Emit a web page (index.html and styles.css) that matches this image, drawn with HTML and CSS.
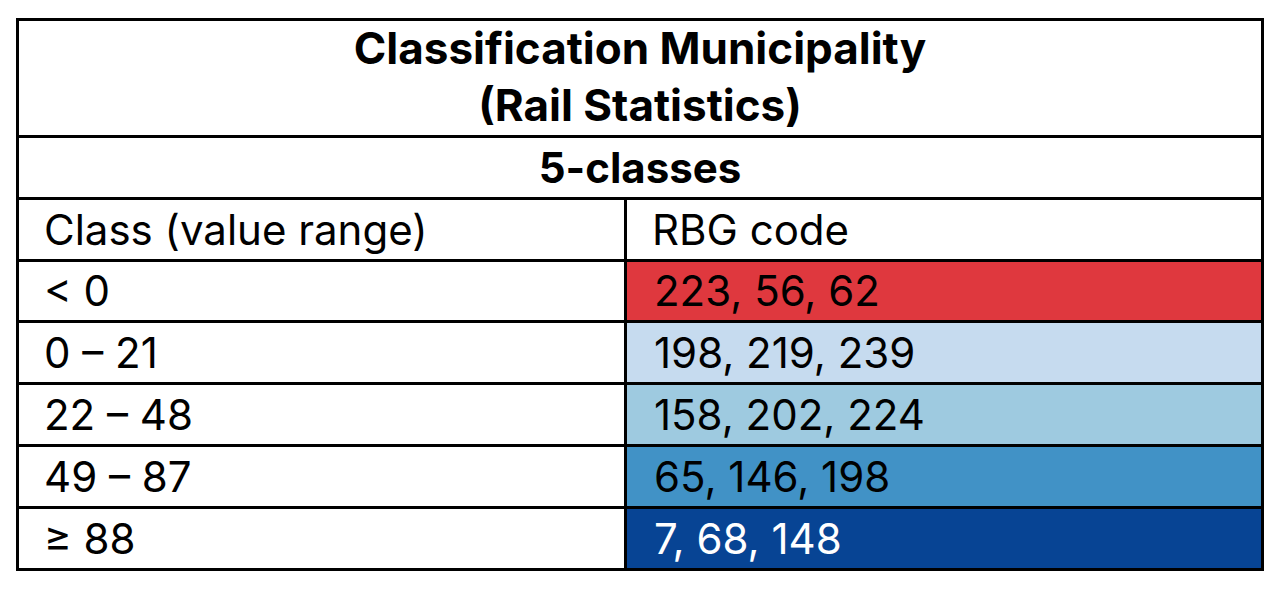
FILE: index.html
```html
<!DOCTYPE html>
<html>
<head>
<meta charset="utf-8">
<link rel="stylesheet" href="styles.css">
</head>
<body>
<div class="legend">
  <div class="cell title span">Classification Municipality<br>(Rail Statistics)</div>
  <div class="cell sub span">5-classes</div>
  <div class="cell">Class (value range)</div>
  <div class="cell">RBG code</div>
  <div class="cell">&lt; 0</div>
  <div class="cell c1">223, 56, 62</div>
  <div class="cell">0 – 21</div>
  <div class="cell c2">198, 219, 239</div>
  <div class="cell">22 – 48</div>
  <div class="cell c3">158, 202, 224</div>
  <div class="cell">49 – 87</div>
  <div class="cell c4">65, 146, 198</div>
  <div class="cell">≥ 88</div>
  <div class="cell c5">7, 68, 148</div>
</div>
</body>
</html>
```
FILE: styles.css
```css
html, body {
  margin: 0;
  padding: 0;
  background: #ffffff;
}
body {
  padding: 18px 0 0 16px;
  font-family: Inter, "Liberation Sans", sans-serif;
  color: #000;
}
.legend {
  display: grid;
  grid-template-columns: 608px 637px;
  grid-template-rows: 117px 62px 62px 61px 62px 62px 62px 62px;
  width: 1245px;
  border-left: 3px solid #000;
  border-top: 3px solid #000;
}
.cell {
  box-sizing: border-box;
  border-right: 3px solid #000;
  border-bottom: 3px solid #000;
  display: flex;
  align-items: center;
  padding: 0 0 0 25px;
  font-size: 42px;
  line-height: 1;
  white-space: nowrap;
}
.span {
  grid-column: 1 / 3;
  justify-content: center;
  padding-left: 0;
  font-weight: 700;
  text-align: center;
}
.title {
  font-size: 44px;
  line-height: 57px;
  padding-bottom: 2px;
}
.sub {
  font-size: 42px;
}
.c1 { background: #df383e; }
.c2 { background: #c6dbef; }
.c3 { background: #9ecae0; }
.c4 { background: #4192c6; }
.c5 { background: #074494; color: #ffffff; }
.c1, .c2, .c3, .c4, .c5 { padding-left: 27px; }
```
